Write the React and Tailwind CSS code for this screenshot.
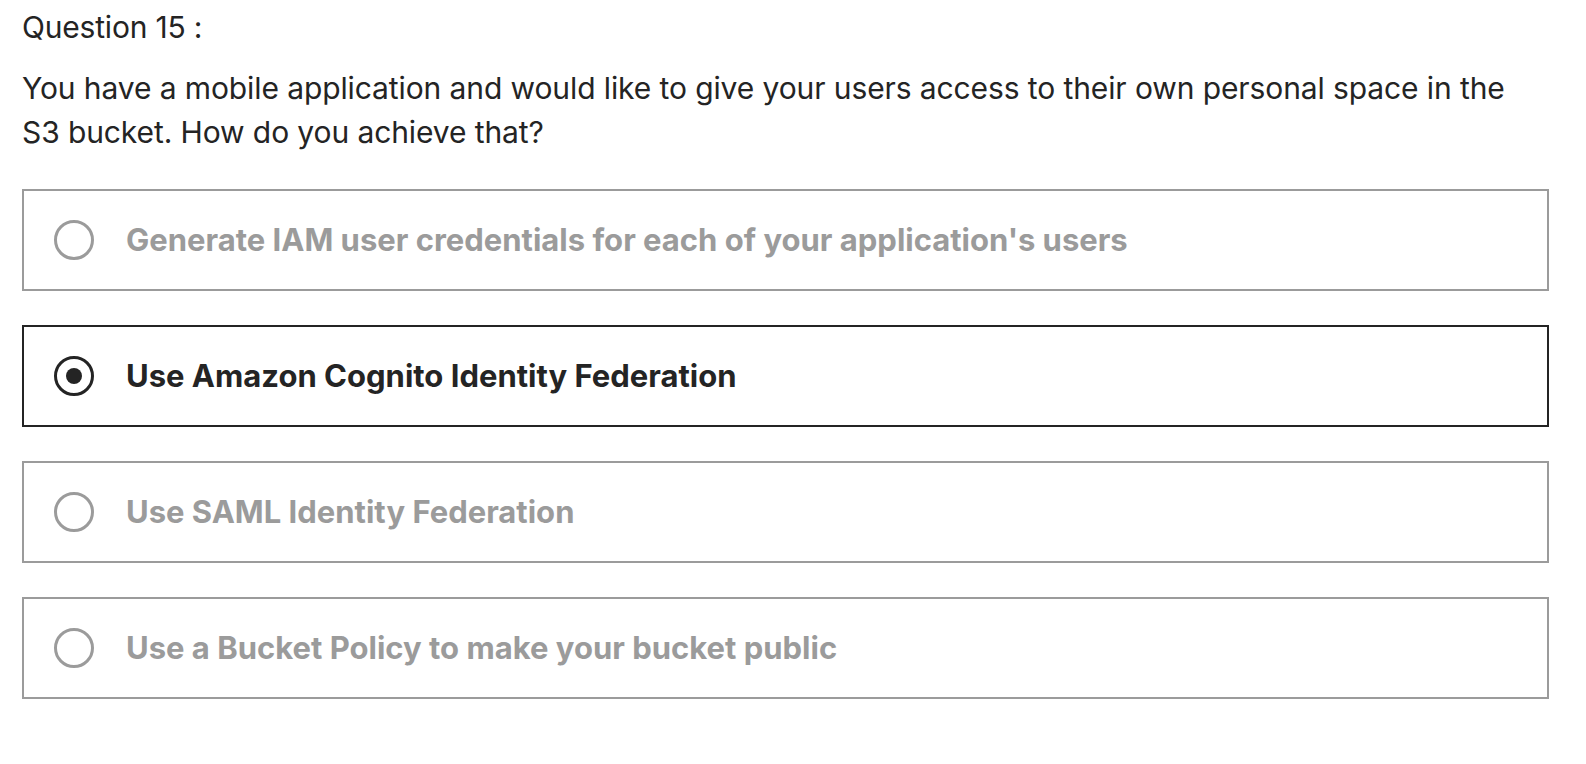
const options = [
  { text: "Generate IAM user credentials for each of your application's users", selected: false },
  { text: 'Use Amazon Cognito Identity Federation', selected: true },
  { text: 'Use SAML Identity Federation', selected: false },
  { text: 'Use a Bucket Policy to make your bucket public', selected: false },
]

function Radio({ selected }) {
  return (
    <div
      className={`w-[40px] h-[40px] rounded-full border-[3px] flex items-center justify-center flex-shrink-0 ${
        selected ? 'border-[#242424]' : 'border-[#9b9b9b]'
      }`}
    >
      {selected && <div className="w-[16px] h-[16px] rounded-full bg-[#242424]" />}
    </div>
  )
}

export default function App() {
  return (
    <div className="min-h-screen bg-white pl-[22px] pr-[37px] pt-[7px] font-['Inter','Liberation_Sans',sans-serif] text-[#242424]">
      <p className="text-[30px] leading-[40px] tracking-[-0.2px]">Question 15 :</p>
      <p className="mt-[19px] max-w-[1510px] text-[30px] leading-[44px] tracking-[-0.1px]">
        You have a mobile application and would like to give your users access to their own personal space in the S3
        bucket. How do you achieve that?
      </p>
      <div className="mt-[35px] flex flex-col gap-[34px]">
        {options.map((o) => (
          <div
            key={o.text}
            className={`h-[102px] border-2 flex items-center pl-[30px] gap-[32px] ${
              o.selected ? 'border-[#242424]' : 'border-[#9b9b9b]'
            }`}
          >
            <Radio selected={o.selected} />
            <span className={`text-[31px] font-bold ${o.selected ? 'text-[#242424]' : 'text-[#9b9b9b]'}`}>
              {o.text}
            </span>
          </div>
        ))}
      </div>
    </div>
  )
}
